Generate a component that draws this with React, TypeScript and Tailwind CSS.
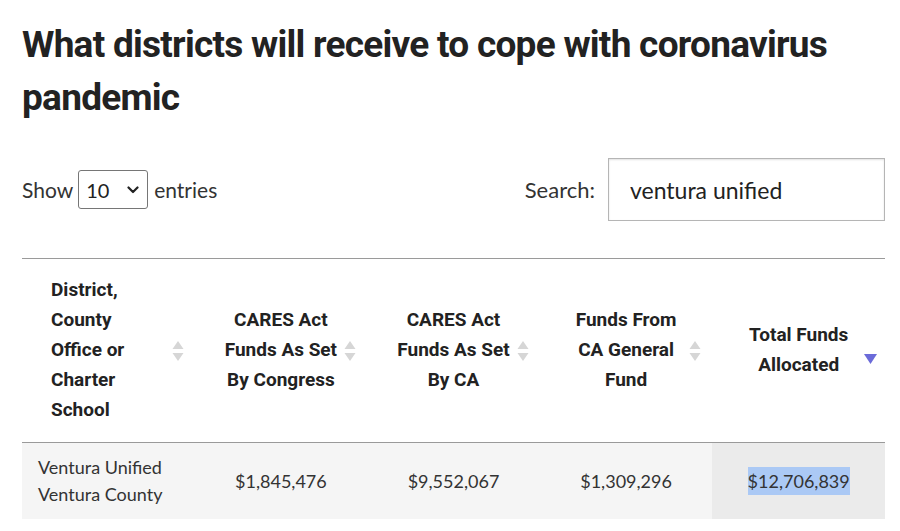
import React from 'react';

const SortBoth: React.FC = () => (
  <svg width="12" height="24" viewBox="0 0 12 24" className="absolute right-[11px] top-1/2 -translate-y-1/2">
    <path d="M6 2 L11.5 10 L0.5 10 Z" fill="#d6d6d6" />
    <path d="M6 22 L11.5 14 L0.5 14 Z" fill="#d6d6d6" />
  </svg>
);

const SortDesc: React.FC = () => (
  <svg width="13" height="10" viewBox="0 0 13 10" className="absolute right-[8px] top-1/2 -translate-y-1/2 mt-[8px]">
    <path d="M0 0 L13 0 L6.5 10 Z" fill="#6b6bd9" />
  </svg>
);

const headers: { lines: string[]; align: 'left' | 'center'; icon: 'both' | 'desc' }[] = [
  { lines: ['District,', 'County', 'Office or', 'Charter', 'School'], align: 'left', icon: 'both' },
  { lines: ['CARES Act', 'Funds As Set', 'By Congress'], align: 'center', icon: 'both' },
  { lines: ['CARES Act', 'Funds As Set', 'By CA'], align: 'center', icon: 'both' },
  { lines: ['Funds From', 'CA General', 'Fund'], align: 'center', icon: 'both' },
  { lines: ['Total Funds', 'Allocated'], align: 'center', icon: 'desc' },
];

export default function App() {
  return (
    <div className="min-h-[531px] bg-white pl-[22px] pr-[15px] pt-[18px] text-[#333] font-['Lato',sans-serif]">
      <h1 className="text-[37px] leading-[53px] font-bold text-[#222] tracking-[-0.02em] font-['Roboto',sans-serif]">
        What districts will receive to cope with coronavirus pandemic
      </h1>

      <div className="mt-[34px] flex items-center justify-between">
        <label className="flex items-center text-[21px]">
          <span>Show</span>
          <span className="relative ml-[5px] mr-[6px]">
            <select
              defaultValue="10"
              className="appearance-none w-[70px] h-[39px] border border-[#767676] rounded-[3px] pl-[7px] text-[20px] bg-white text-[#222]"
            >
              <option value="10">10</option>
              <option value="25">25</option>
              <option value="50">50</option>
              <option value="100">100</option>
            </select>
            <svg width="12" height="8" viewBox="0 0 12 8" className="absolute right-[9px] top-[16px] pointer-events-none">
              <path d="M1.5 1.5 L6 6 L10.5 1.5" fill="none" stroke="#222" strokeWidth="2.2" strokeLinecap="round" strokeLinejoin="round" />
            </svg>
          </span>
          <span>entries</span>
        </label>
        <label className="flex items-center text-[22px]">
          <span className="mr-[13px]">Search:</span>
          <input
            type="text"
            defaultValue="ventura unified"
            className="w-[277px] h-[63px] border border-[#b5b5b5] shadow-[inset_0_1px_2px_rgba(0,0,0,0.12)] pl-[21px] text-[23px] text-[#222] outline-none"
          />
        </label>
      </div>

      <table className="mt-[37px] w-[863px] table-fixed border-collapse">
        <thead>
          <tr className="border-t border-b border-[#9a9a9a]">
            {headers.map((h, i) => (
              <th
                key={i}
                className={`relative w-1/5 pt-[16px] pb-[17px] text-[19px] leading-[30px] font-bold text-[#222] font-['Roboto',sans-serif] ${
                  h.align === 'left' ? 'text-left pl-[29px]' : 'text-center'
                }`}
              >
                {h.lines.map((l, j) => (
                  <div key={j}>{l}</div>
                ))}
                {h.icon === 'both' ? <SortBoth /> : <SortDesc />}
              </th>
            ))}
          </tr>
        </thead>
        <tbody>
          <tr className="bg-[#f5f5f5] text-[18px]">
            <td className="pl-[16px] py-[11px] leading-[27px]">
              <div>Ventura Unified</div>
              <div>Ventura County</div>
            </td>
            <td className="text-center">$1,845,476</td>
            <td className="text-center">$9,552,067</td>
            <td className="text-center">$1,309,296</td>
            <td className="text-center bg-[#ebebeb]">
              <span className="bg-[#abc9f5] py-[3px]">$12,706,839</span>
            </td>
          </tr>
        </tbody>
      </table>
    </div>
  );
}
